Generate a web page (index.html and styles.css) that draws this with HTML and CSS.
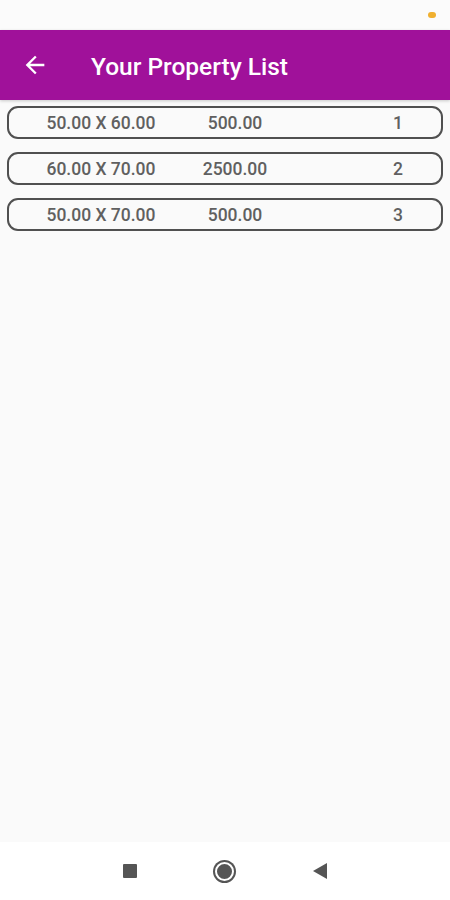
FILE: index.html
```html
<!DOCTYPE html>
<html lang="en">
<head>
    <meta charset="UTF-8">
    <title>Your Property List</title>
    <link rel="stylesheet" href="styles.css">
</head>
<body>
    <div class="screen">
        <div class="status-bar">
            <span class="status-dot"></span>
        </div>

        <div class="app-bar">
            <svg class="back" width="28" height="28" viewBox="0 0 24 24">
                <path d="M20 11H7.83l5.59-5.59L12 4l-8 8 8 8 1.41-1.41L7.83 13H20v-2z" fill="#fff"/>
            </svg>
            <h1 class="title">Your Property List</h1>
        </div>

        <div class="list">
            <div class="row">
                <span class="size">50.00 X 60.00</span>
                <span class="price">500.00</span>
                <span class="num">1</span>
            </div>
            <div class="row">
                <span class="size">60.00 X 70.00</span>
                <span class="price">2500.00</span>
                <span class="num">2</span>
            </div>
            <div class="row">
                <span class="size">50.00 X 70.00</span>
                <span class="price">500.00</span>
                <span class="num">3</span>
            </div>
        </div>

        <div class="nav-bar">
            <span class="nav-square"></span>
            <span class="nav-home"></span>
            <svg class="nav-back" width="16" height="18" viewBox="0 0 16 18">
                <path d="M15 1L1 9l14 8z" fill="#555"/>
            </svg>
        </div>
    </div>
</body>
</html>
```

FILE: styles.css
```css
body {
    margin: 0;
    padding: 0;
    font-family: Roboto, "Noto Sans", sans-serif;
    background-color: #fafafa;
}

.screen {
    width: 450px;
    height: 900px;
    display: flex;
    flex-direction: column;
}

.status-bar {
    height: 30px;
    background-color: #fbfbfb;
    display: flex;
    align-items: center;
    justify-content: flex-end;
    padding-right: 14px;
}

.status-dot {
    width: 8px;
    height: 6px;
    border-radius: 4px;
    background-color: #f0b030;
}

.app-bar {
    height: 70px;
    background-color: #a0119a;
    display: flex;
    align-items: center;
    padding-left: 21px;
    box-shadow: 0 1px 3px rgba(0,0,0,0.2);
}

.back {
    width: 28px;
    height: 28px;
}

.title {
    margin: 3px 0 0 42px;
    color: #fff;
    font-size: 24.5px;
    font-weight: 500;
}

.list {
    flex: 1;
    padding: 6px 7px 0 7px;
    display: flex;
    flex-direction: column;
    gap: 13px;
}

.row {
    height: 29px;
    border: 2px solid #505050;
    border-radius: 11px;
    display: grid;
    grid-template-columns: 184px 84px 1fr;
    align-items: center;
    color: #606060;
    font-size: 17.5px;
    font-weight: 500;
}

.size,
.price {
    text-align: center;
}

.num {
    text-align: right;
    padding-right: 38px;
}

.nav-bar {
    height: 58px;
    background-color: #fff;
    display: flex;
    align-items: center;
    justify-content: center;
    gap: 78px;
}

.nav-square {
    width: 14px;
    height: 14px;
    background-color: #555;
    border-radius: 1px;
}

.nav-home {
    width: 15px;
    height: 15px;
    border-radius: 50%;
    background-color: #555;
    border: 2px solid #fff;
    box-shadow: 0 0 0 2px #555;
}

.nav-back {
    width: 16px;
    height: 18px;
}
```
